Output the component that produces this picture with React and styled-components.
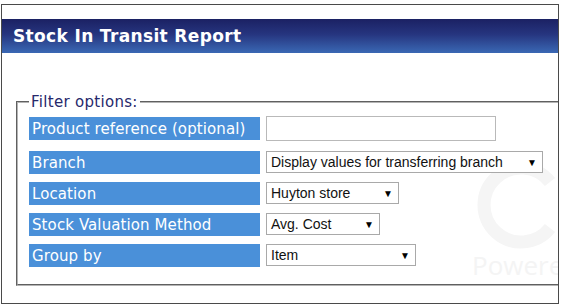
import React from "react";
import styled, { createGlobalStyle } from "styled-components";

const Global = createGlobalStyle`
  html, body { margin: 0; padding: 0; background: #fff; }
  body { font-family: "DejaVu Sans", Verdana, sans-serif; }
`;

const Frame = styled.div`
  position: relative;
  box-sizing: border-box;
  margin: 4px 0 0 1px;
  width: 558px;
  height: 300px;
  border: 1px solid #4a4a4a;
  overflow: hidden;
  background: #fff;
`;

const Header = styled.div`
  margin-top: 14px;
  height: 34px;
  display: flex;
  align-items: center;
  padding-left: 11px;
  background: linear-gradient(to bottom, #1b2163 0%, #26357f 45%, #3a68b4 100%);
  color: #fff;
  font-weight: bold;
  font-size: 17px;
  letter-spacing: 0.35px;
  font-family: "DejaVu Sans", Verdana, sans-serif;
`;

const LogoMark = styled.svg`
  position: absolute;
  left: 470px;
  top: 155px;
  pointer-events: none;
`;

const PoweredMark = styled.div`
  position: absolute;
  left: 470px;
  top: 248px;
  height: 24px;
  font-family: "Open Sans", "DejaVu Sans", sans-serif;
  font-size: 26px;
  line-height: 24px;
  color: #f4f4f4;
  pointer-events: none;
  white-space: nowrap;
`;

const Fieldset = styled.fieldset`
  position: relative;
  margin: 40px -20px 0 14px;
  padding: 5px 0 17px 11px;
  border: 2px groove #b4b4b4;
`;

const Legend = styled.legend`
  padding: 0 2px;
  color: #27286b;
  font-size: 15px;
  letter-spacing: 0.3px;
  font-family: "DejaVu Sans", Verdana, sans-serif;
`;

const Grid = styled.div`
  position: relative;
  display: grid;
  grid-template-columns: 231px auto;
  column-gap: 6px;
  row-gap: 8px;
  align-items: start;
  justify-items: start;
`;

const Label = styled.div`
  box-sizing: border-box;
  width: 231px;
  height: 23px;
  margin-top: ${(p) => p.$mt || 0}px;
  padding-left: 3px;
  display: flex;
  align-items: center;
  background: #4a90d9;
  color: #fff;
  font-size: 15px;
  letter-spacing: 0.1px;
  font-family: "DejaVu Sans", Verdana, sans-serif;
  white-space: nowrap;
`;

const TextInput = styled.div`
  box-sizing: border-box;
  width: 230px;
  height: 25px;
  border: 1px solid #b9b9b9;
  background: #fff;
`;

const Select = styled.div`
  box-sizing: border-box;
  width: ${(p) => p.$w}px;
  height: 22px;
  margin-top: ${(p) => p.$mt || 0}px;
  padding: 0 5px 0 4px;
  display: flex;
  align-items: center;
  justify-content: space-between;
  border: 1px solid #a9a9a9;
  background: #fff;
  color: #111;
  font-size: 14px;
  font-family: "Liberation Sans", Arial, sans-serif;
  white-space: nowrap;
`;

const Arrow = styled.span`
  font-size: 10px;
  color: #000;
  margin-left: 8px;
`;

const rows = [
  { label: "Branch", value: "Display values for transferring branch", w: 277 },
  { label: "Location", value: "Huyton store", w: 133 },
  { label: "Stock Valuation Method", value: "Avg. Cost", w: 114 },
  { label: "Group by", value: "Item", w: 150 },
];

export default function App() {
  return (
    <>
      <Global />
      <Frame>
        <Header>Stock In Transit Report</Header>
        <LogoMark width="90" height="90" viewBox="0 0 90 90" aria-hidden="true">
          <path
            d="M78 22 A37 37 0 1 0 78 68"
            fill="none"
            stroke="#f5f5f5"
            strokeWidth="13"
          />
        </LogoMark>
        <PoweredMark>Powered</PoweredMark>
        <Fieldset>
          <Legend>Filter options:</Legend>
          <Grid>
            <Label $mt={1}>Product reference (optional)</Label>
            <TextInput />
            {rows.map((r, i) => (
              <React.Fragment key={r.label}>
                <Label $mt={i === 0 ? 2 : 0}>{r.label}</Label>
                <Select $w={r.w} $mt={i === 0 ? 2 : 0}>
                  <span>{r.value}</span>
                  <Arrow>▼</Arrow>
                </Select>
              </React.Fragment>
            ))}
          </Grid>
        </Fieldset>
      </Frame>
    </>
  );
}
